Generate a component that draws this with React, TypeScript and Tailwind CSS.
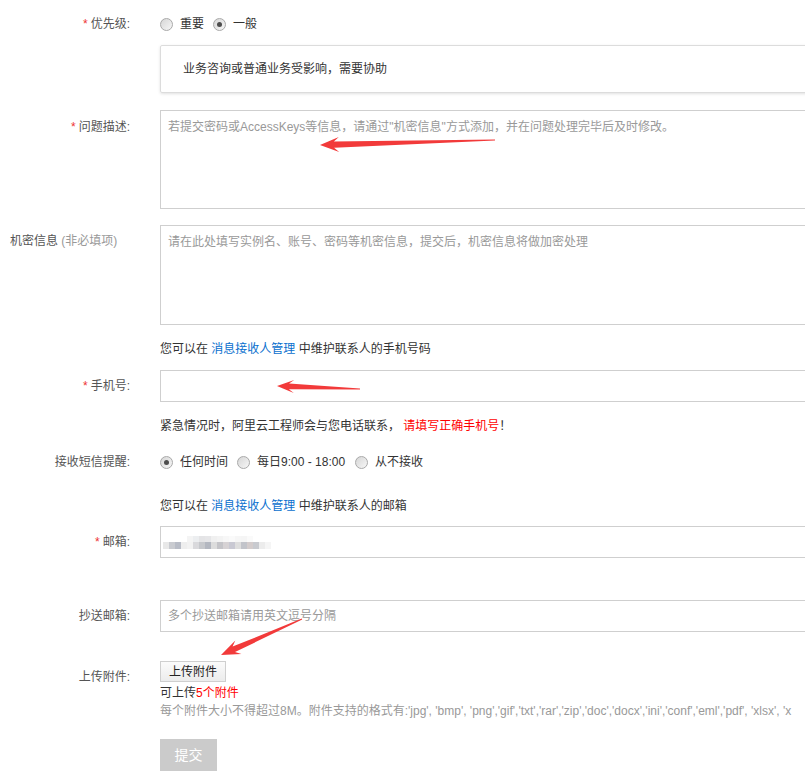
import React from "react";

type Pt = [number, number];

function arrowPoints(tip: Pt, tail: Pt, headLen: number, headHalf: number, shaftHalf: number, tailHalf: number): string {
  const dx = tail[0] - tip[0];
  const dy = tail[1] - tip[1];
  const len = Math.sqrt(dx * dx + dy * dy);
  const ux = dx / len;
  const uy = dy / len;
  const nx = -uy;
  const ny = ux;
  const at = (d: number, o: number): Pt => [tip[0] + ux * d + nx * o, tip[1] + uy * d + ny * o];
  const pts: Pt[] = [
    tip,
    at(headLen + 2, headHalf),
    at(headLen - 3, shaftHalf),
    at(len, tailHalf),
    at(len, -tailHalf),
    at(headLen - 3, -shaftHalf),
    at(headLen + 2, -headHalf),
  ];
  return pts.map((p) => `${p[0].toFixed(1)},${p[1].toFixed(1)}`).join(" ");
}

function Radio({ checked }: { checked?: boolean }) {
  return (
    <span className="inline-flex h-[13px] w-[13px] shrink-0 items-center justify-center rounded-full border border-[#a9a9a9] bg-linear-to-br from-[#d6d6d6] to-[#f7f7f7]">
      {checked && <span className="h-[5px] w-[5px] rounded-full bg-[#4d4d4d]" />}
    </span>
  );
}

function Label({ children, star, className }: { children: React.ReactNode; star?: boolean; className?: string }) {
  return (
    <div className={"w-[130px] shrink-0 text-right text-[12px] leading-[16px] text-[#555] " + (className ?? "")}>
      {star && <span className="mr-[3px] text-[#e33]">*</span>}
      {children}
    </div>
  );
}

const blurTop = ["#fff", "#fff", "#fff", "#fff", "#f4f4f4", "#eceef0", "#e4e4e6", "#e6e6e8", "#f0f0f0", "#f3f3f3", "#f7f7f7", "#fafafa", "#f6f6f6", "#f5f5f5", "#fafafa", "#fff", "#fff", "#fff"];
const blurBottom = ["#e8e8e8", "#c9cbd0", "#b8bcc6", "#eeeeee", "#f2f2f2", "#d9d9dc", "#c6c8cc", "#b3b7c0", "#dcdcdc", "#c4c4c8", "#d6d2d4", "#c9c9d3", "#dedede", "#c2c4ca", "#d3cccc", "#c8cacf", "#ececec", "#f5f5f5"];

export default function App() {
  return (
    <div className="relative h-[776px] w-[805px] overflow-hidden bg-white font-['Liberation_Sans','Noto_Sans_CJK_SC',sans-serif] text-[12px] text-[#333]">
      <div className="flex flex-col pt-[16px]">
        {/* 优先级 */}
        <div className="flex items-center">
          <Label star>优先级:</Label>
          <div className="ml-[30px] flex items-center text-[12px] leading-[16px]">
            <Radio />
            <span className="ml-[7px] mr-[9px]">重要</span>
            <Radio checked />
            <span className="ml-[7px]">一般</span>
          </div>
        </div>

        {/* notice box */}
        <div className="flex">
          <div className="ml-[160px] mt-[13px] flex h-[48px] w-[700px] shrink-0 items-center rounded-[2px] border border-[#dcdcdc] pl-[22px] shadow-[0_1px_3px_rgba(0,0,0,0.12)]">
            <span className="text-[12px] leading-[16px] text-[#333]">业务咨询或普通业务受影响，需要协助</span>
          </div>
        </div>

        {/* 问题描述 */}
        <div className="mt-[17px] flex">
          <Label star className="pt-[9px]">问题描述:</Label>
          <div className="ml-[30px] h-[99px] w-[700px] shrink-0 border border-[#cfcfcf] px-[7px] pt-[8px] text-[12px] leading-[16px] text-[#999]">
            若提交密码或AccessKeys等信息，请通过"机密信息"方式添加，并在问题处理完毕后及时修改。
          </div>
        </div>

        {/* 机密信息 */}
        <div className="mt-[16px] flex">
          <div className="w-[130px] shrink-0 pl-[10px] pt-[8px] text-[12px] leading-[16px] text-[#555]">
            机密信息 <span className="text-[#999]">(非必填项)</span>
          </div>
          <div className="ml-[30px] h-[100px] w-[700px] shrink-0 border border-[#cfcfcf] px-[7px] pt-[8px] text-[12px] leading-[16px] text-[#999]">
            请在此处填写实例名、账号、密码等机密信息，提交后，机密信息将做加密处理
          </div>
        </div>

        {/* help text phone */}
        <div className="ml-[160px] mt-[16px] text-[12px] leading-[16px] text-[#333]">
          您可以在 <span className="text-[#0a6fce]">消息接收人管理</span> 中维护联系人的手机号码
        </div>

        {/* 手机号 */}
        <div className="mt-[13px] flex items-center">
          <Label star>手机号:</Label>
          <div className="ml-[30px] h-[32px] w-[700px] shrink-0 border border-[#cfcfcf]" />
        </div>

        <div className="ml-[160px] mt-[16px] text-[12px] leading-[16px] text-[#333]">
          紧急情况时，阿里云工程师会与您电话联系， <span className="text-[#f00]">请填写正确手机号</span>！
        </div>

        {/* 接收短信提醒 */}
        <div className="mt-[20px] flex items-center">
          <Label>接收短信提醒:</Label>
          <div className="ml-[30px] flex items-center text-[12px] leading-[16px] text-[#333]">
            <Radio checked />
            <span className="ml-[7px] mr-[9px]">任何时间</span>
            <Radio />
            <span className="ml-[7px] mr-[10px]">每日9:00 - 18:00</span>
            <Radio />
            <span className="ml-[7px]">从不接收</span>
          </div>
        </div>

        <div className="ml-[160px] mt-[28px] text-[12px] leading-[16px] text-[#333]">
          您可以在 <span className="text-[#0a6fce]">消息接收人管理</span> 中维护联系人的邮箱
        </div>

        {/* 邮箱 */}
        <div className="mt-[12px] flex items-center">
          <Label star>邮箱:</Label>
          <div className="ml-[30px] flex h-[32px] w-[700px] shrink-0 flex-col justify-center border border-[#cfcfcf] pl-[2px]">
            <div className="flex">
              {blurTop.map((c, i) => (
                <span key={i} className="h-[6px] w-[6px]" style={{ backgroundColor: c }} />
              ))}
            </div>
            <div className="flex">
              {blurBottom.map((c, i) => (
                <span key={i} className="h-[7px] w-[6px]" style={{ backgroundColor: c }} />
              ))}
            </div>
          </div>
        </div>

        {/* 抄送邮箱 */}
        <div className="mt-[42px] flex items-center">
          <Label>抄送邮箱:</Label>
          <div className="ml-[30px] flex h-[32px] w-[700px] shrink-0 items-center border border-[#cfcfcf] pl-[7px] text-[12px] leading-[16px] text-[#999]">
            多个抄送邮箱请用英文逗号分隔
          </div>
        </div>

        {/* 上传附件 */}
        <div className="mt-[29px] flex">
          <Label className="pt-[8px]">上传附件:</Label>
          <div className="ml-[30px] flex flex-col">
            <div className="flex">
              <div className="flex h-[21px] items-center border border-[#cfcfcf] bg-linear-to-b from-[#fbfbfb] to-[#ececec] px-[8px] text-[12px] leading-[16px] text-[#222]">
                上传附件
              </div>
            </div>
            <div className="mt-[3px] text-[12px] leading-[16px] text-[#333]">
              可上传<span className="text-[#f00]">5个附件</span>
            </div>
            <div className="mt-[2px] whitespace-nowrap text-[12px] leading-[16px] text-[#999]">
              每个附件大小不得超过8M。附件支持的格式有:'jpg', 'bmp', 'png','gif','txt','rar','zip','doc','docx','ini','conf','eml','pdf', 'xlsx', 'x
            </div>
            <div className="mt-[20px] flex">
              <div className="flex h-[32px] w-[57px] items-center justify-center bg-[#cbcbcb] text-[14px] text-white">提交</div>
            </div>
          </div>
        </div>
      </div>

      {/* annotation arrows */}
      <svg className="pointer-events-none absolute left-0 top-0" width="805" height="776" viewBox="0 0 805 776">
        <polygon points={arrowPoints([320, 145], [495, 140], 17, 7.5, 3.2, 0.4)} fill="#f23a3a" />
        <polygon points={arrowPoints([277, 386], [360, 389], 15, 6.5, 2.8, 0.4)} fill="#f23a3a" />
        <polygon points={arrowPoints([221, 655], [302, 619], 17, 7.5, 3, 0.4)} fill="#f23a3a" />
      </svg>
    </div>
  );
}
